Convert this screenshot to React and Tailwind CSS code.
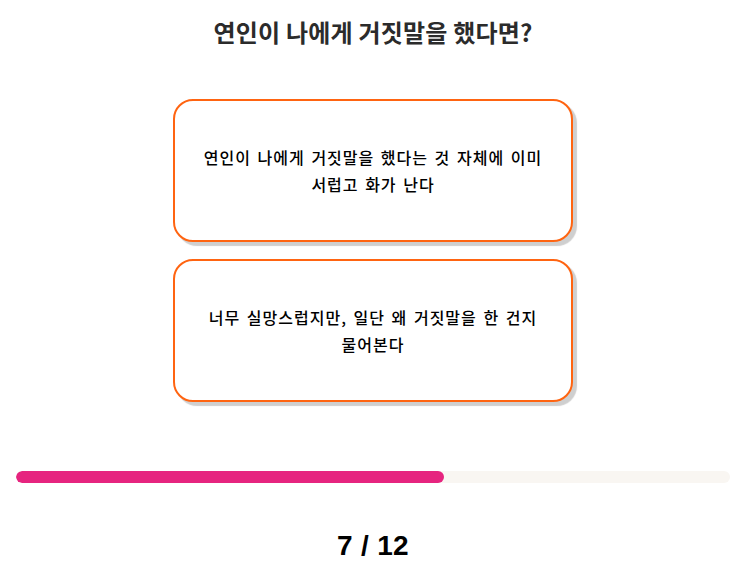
import { useState } from "react"

const answers = [
  "연인이 나에게 거짓말을 했다는 것 자체에 이미 서럽고 화가 난다",
  "너무 실망스럽지만, 일단 왜 거짓말을 한 건지 물어본다",
]

export default function App() {
  const [current] = useState(7)
  const total = 12

  return (
    <div className="min-h-screen bg-white font-['Noto_Sans_CJK_KR','Noto_Sans',sans-serif] flex flex-col items-center">
      {/* Question */}
      <h1 className="pt-4 text-2xl leading-8 font-bold text-[#2b2b2b] tracking-[0.2px]">연인이 나에게 거짓말을 했다면?</h1>

      {/* Answers */}
      <div className="mt-[51px] flex flex-col gap-[17px]">
        {answers.map((text) => (
          <button
            key={text}
            className="w-[400px] h-[143px] bg-white border-2 border-[#ff6411] rounded-[20px] shadow-[4px_4px_1px_#cfcfcf] flex items-center justify-center px-7 text-center text-base leading-[27px] font-medium text-black break-keep tracking-[1px] [word-spacing:2px]"
          >
            {text}
          </button>
        ))}
      </div>

      {/* Progress */}
      <div className="w-full px-4 mt-[69px]">
        <div className="h-3 w-full rounded-full bg-[#f9f6f2] overflow-hidden">
          <div className="h-full w-[60%] rounded-full bg-[#e6247f]" />
        </div>
      </div>

      <div className="mt-[45px] font-['Liberation_Sans',Arial,sans-serif] text-[28px] leading-9 font-bold text-black tracking-[0.3px]">
        {current} / {total}
      </div>
    </div>
  )
}
